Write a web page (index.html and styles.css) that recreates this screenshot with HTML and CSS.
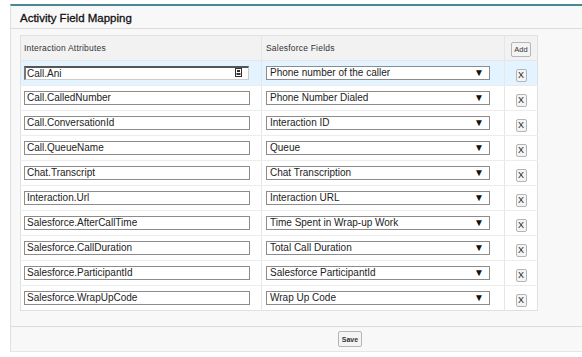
FILE: index.html
```html
<!DOCTYPE html>
<html>
<head>
    <title>Activity Field Mapping</title>
    <link rel="stylesheet" href="styles.css">
</head>
<body>
    <div class="panel">
        <div class="panel-header">
            <h2>Activity Field Mapping</h2>
        </div>
        <div class="panel-body">
            <table class="mapping">
                <thead>
                    <tr>
                        <th class="col-attr">Interaction Attributes</th>
                        <th class="col-field">Salesforce Fields</th>
                        <th class="col-btn"><button class="btn btn-add">Add</button></th>
                    </tr>
                </thead>
                <tbody>
                    <tr class="highlight">
                        <td><div class="input focused">Call.Ani<svg class="autofill" width="7" height="9" viewBox="0 0 7 9"><rect x="0.5" y="0.5" width="6" height="8" fill="#fff" stroke="#333"/><rect x="2" y="2" width="3" height="2" fill="#333"/><rect x="1.5" y="5" width="4" height="2" fill="#333"/></svg></div></td>
                        <td><div class="select">Phone number of the caller<span class="arrow">&#9660;</span></div></td>
                        <td class="col-btn"><button class="btn btn-x">X</button></td>
                    </tr>
                    <tr>
                        <td><div class="input">Call.CalledNumber</div></td>
                        <td><div class="select">Phone Number Dialed<span class="arrow">&#9660;</span></div></td>
                        <td class="col-btn"><button class="btn btn-x">X</button></td>
                    </tr>
                    <tr>
                        <td><div class="input">Call.ConversationId</div></td>
                        <td><div class="select">Interaction ID<span class="arrow">&#9660;</span></div></td>
                        <td class="col-btn"><button class="btn btn-x">X</button></td>
                    </tr>
                    <tr>
                        <td><div class="input">Call.QueueName</div></td>
                        <td><div class="select">Queue<span class="arrow">&#9660;</span></div></td>
                        <td class="col-btn"><button class="btn btn-x">X</button></td>
                    </tr>
                    <tr>
                        <td><div class="input">Chat.Transcript</div></td>
                        <td><div class="select">Chat Transcription<span class="arrow">&#9660;</span></div></td>
                        <td class="col-btn"><button class="btn btn-x">X</button></td>
                    </tr>
                    <tr>
                        <td><div class="input">Interaction.Url</div></td>
                        <td><div class="select">Interaction URL<span class="arrow">&#9660;</span></div></td>
                        <td class="col-btn"><button class="btn btn-x">X</button></td>
                    </tr>
                    <tr>
                        <td><div class="input">Salesforce.AfterCallTime</div></td>
                        <td><div class="select">Time Spent in Wrap-up Work<span class="arrow">&#9660;</span></div></td>
                        <td class="col-btn"><button class="btn btn-x">X</button></td>
                    </tr>
                    <tr>
                        <td><div class="input">Salesforce.CallDuration</div></td>
                        <td><div class="select">Total Call Duration<span class="arrow">&#9660;</span></div></td>
                        <td class="col-btn"><button class="btn btn-x">X</button></td>
                    </tr>
                    <tr>
                        <td><div class="input">Salesforce.ParticipantId</div></td>
                        <td><div class="select">Salesforce ParticipantId<span class="arrow">&#9660;</span></div></td>
                        <td class="col-btn"><button class="btn btn-x">X</button></td>
                    </tr>
                    <tr>
                        <td><div class="input">Salesforce.WrapUpCode</div></td>
                        <td><div class="select">Wrap Up Code<span class="arrow">&#9660;</span></div></td>
                        <td class="col-btn"><button class="btn btn-x">X</button></td>
                    </tr>
                </tbody>
            </table>
        </div>
        <div class="panel-footer">
            <button class="btn btn-save">Save</button>
        </div>
    </div>
</body>
</html>
```

FILE: styles.css
```css
body {
    margin: 0;
    padding: 4px 0 0 10px;
    background-color: white;
    font-family: "Liberation Sans", Arial, sans-serif;
    overflow: hidden;
}
.panel {
    width: 600px;
    background-color: #f8f8f8;
    border-top: 2px solid #4a8796;
    border-left: 1px solid #e0e0e0;
    border-bottom: 1px solid #e6e6e6;
}
.panel-header {
    height: 22px;
    border-bottom: 1px solid #dcdcdc;
    padding-left: 9px;
}
.panel-header h2 {
    margin: 0;
    padding-top: 6px;
    font-size: 11.5px;
    font-weight: normal;
    color: #111;
    line-height: 13px;
    -webkit-text-stroke: 0.3px #111;
}
.panel-body {
    padding: 6px 0 15px 9px;
}
.mapping {
    width: 517px;
    border-collapse: collapse;
    border: 1px solid #e0e0e0;
    table-layout: fixed;
    background-color: #fff;
}
.mapping th {
    background-color: #f2f2f2;
    height: 24px;
    padding: 0 0 0 3px;
    text-align: left;
    font-size: 8.5px;
    font-weight: normal;
    color: #333;
    letter-spacing: 0.2px;
    border-bottom: 1px solid #e6e6e6;
}
.mapping td {
    height: 24px;
    padding: 0 0 0 3px;
    border-bottom: 1px solid #ececec;
}
.mapping tbody tr:last-child td {
    border-bottom: none;
}
.col-attr {
    width: 237px;
}
.col-field {
    width: 238px;
}
.mapping .col-btn {
    width: 32px;
    padding: 0;
    text-align: center;
    border-left: 1px solid #e6e6e6;
}
.mapping th.col-field,
.mapping td:nth-child(2) {
    border-left: 1px solid #e6e6e6;
    padding-left: 4px;
}
.highlight td {
    background-color: #e3f3ff;
}
.input, .select {
    position: relative;
    box-sizing: border-box;
    height: 14px;
    border: 1px solid #8c8c8c;
    background-color: #fff;
    font-size: 10px;
    line-height: 12px;
    color: #222;
    padding-left: 2px;
    white-space: nowrap;
}
.input {
    width: 226px;
}
.input.focused {
    width: 225px;
    border-top: 2px solid #555;
    border-left: 2px solid #777;
    border-right: 1px solid #ccc;
    border-bottom: 1px solid #ccc;
    line-height: 11px;
    padding-left: 1px;
}
.autofill {
    position: absolute;
    right: 6px;
    top: 0;
}
.select {
    width: 224px;
    padding-left: 3px;
}
.arrow {
    position: absolute;
    right: 5px;
    top: 0;
    font-size: 10px;
    line-height: 11px;
    color: #111;
}
.btn {
    font-family: "Liberation Sans", Arial, sans-serif;
    background-color: #f4f4f4;
    border: 1px solid #b5b5b5;
    border-radius: 2px;
    color: #333;
    padding: 0;
    cursor: pointer;
}
.btn-add {
    width: 20px;
    height: 15px;
    font-size: 7.5px;
    margin-top: 2px;
}
.btn-x {
    width: 11px;
    height: 13px;
    font-size: 9px;
    line-height: 11px;
    margin-top: 3px;
    color: #222;
}
.panel-footer {
    border-top: 1px solid #dcdcdc;
    height: 24px;
    padding-left: 327px;
}
.btn-save {
    width: 24px;
    height: 16px;
    font-size: 7px;
    font-weight: bold;
    margin-top: 4px;
}
```
